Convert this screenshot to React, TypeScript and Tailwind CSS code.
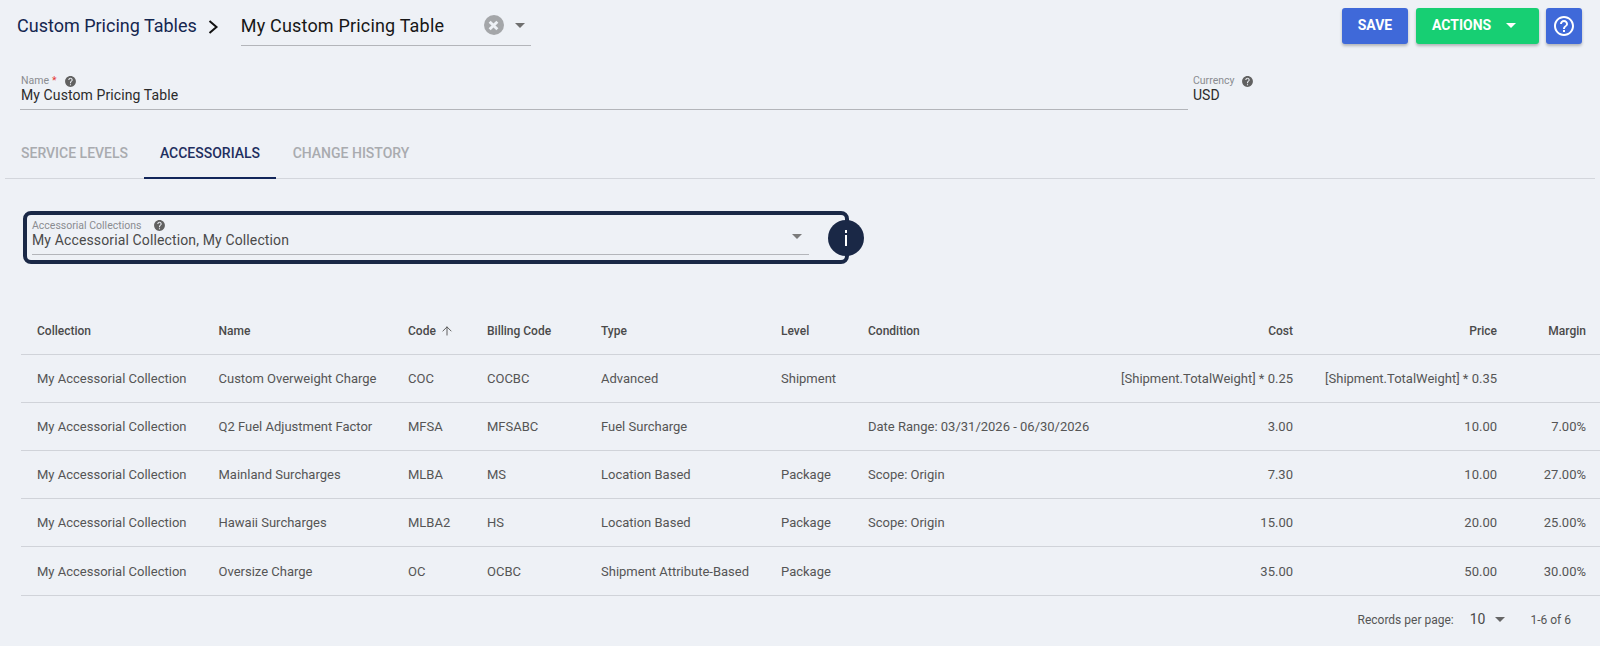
import { ArrowUp } from "lucide-react";

function Caret({ className }: { className: string }) {
  return (
    <svg viewBox="0 0 10 5" className={className} fill="currentColor">
      <path d="M0 0 L10 0 L5 5 Z" />
    </svg>
  );
}

function HelpDot() {
  return (
    <svg viewBox="0 0 24 24" className="w-[13px] h-[13px] text-[#616161]" fill="currentColor">
      <path d="M12 2C6.48 2 2 6.48 2 12s4.48 10 10 10 10-4.48 10-10S17.52 2 12 2zm1 17h-2v-2h2v2zm2.07-7.75l-.9.92C13.45 12.9 13 13.5 13 15h-2v-.5c0-1.1.45-2.1 1.17-2.83l1.24-1.26c.37-.36.59-.86.59-1.41 0-1.1-.9-2-2-2s-2 .9-2 2H8c0-2.21 1.79-4 4-4s4 1.79 4 4c0 .88-.36 1.68-.93 2.25z" />
    </svg>
  );
}

const rows = [
  ["My Accessorial Collection", "Custom Overweight Charge", "COC", "COCBC", "Advanced", "Shipment", "", "[Shipment.TotalWeight] * 0.25", "[Shipment.TotalWeight] * 0.35", ""],
  ["My Accessorial Collection", "Q2 Fuel Adjustment Factor", "MFSA", "MFSABC", "Fuel Surcharge", "", "Date Range: 03/31/2026 - 06/30/2026", "3.00", "10.00", "7.00%"],
  ["My Accessorial Collection", "Mainland Surcharges", "MLBA", "MS", "Location Based", "Package", "Scope: Origin", "7.30", "10.00", "27.00%"],
  ["My Accessorial Collection", "Hawaii Surcharges", "MLBA2", "HS", "Location Based", "Package", "Scope: Origin", "15.00", "20.00", "25.00%"],
  ["My Accessorial Collection", "Oversize Charge", "OC", "OCBC", "Shipment Attribute-Based", "Package", "", "35.00", "50.00", "30.00%"],
];

const headers = ["Collection", "Name", "Code", "Billing Code", "Type", "Level", "Condition", "Cost", "Price", "Margin"];
const widths = ["w-[181.5px]", "w-[189.5px]", "w-[79px]", "w-[114px]", "w-[180px]", "w-[87px]", "w-[250px]", "w-[207px]", "w-[204px]", "w-[89px]"];

export default function App() {
  return (
    <div className="w-[1600px] h-[646px] overflow-hidden bg-[#eef1f6] font-['Roboto',sans-serif] text-[#3d3d3d]">
      <div className="flex items-start justify-between pl-[17px] pr-[18px] pt-[8px]">
        <div className="flex items-start">
          <span className="mt-[7px] text-[18px] leading-[22px] text-[#15264f]">Custom Pricing Tables</span>
          <svg viewBox="0 0 12 16" className="w-[12px] h-[16px] ml-[10px] mt-[11px] text-[#111]" fill="none" stroke="currentColor" strokeWidth="2">
            <path d="M2.5 2 L9.5 8 L2.5 14" />
          </svg>
          <div className="ml-[22px] w-[290px] h-[38px] border-b border-[#b3b5ba] flex items-center">
            <span className="text-[18px] leading-[22px] text-[#171717] mt-[-1px] tracking-[0.18px]">My Custom Pricing Table</span>
            <span className="ml-auto mr-[6px] mb-[3px] flex items-center">
              <span className="w-[20px] h-[20px] mr-[1px] rounded-full bg-[#a4a6a9] flex items-center justify-center">
                <svg viewBox="0 0 10 10" className="w-[11px] h-[11px]" stroke="#eef1f6" strokeWidth="2.6"><path d="M1.5 1.5 L8.5 8.5 M8.5 1.5 L1.5 8.5" /></svg>
              </span>
              <Caret className="w-[10px] h-[5px] ml-[10px] text-[#6f6f6f]" />
            </span>
          </div>
        </div>
        <div className="flex items-start">
          <button className="w-[66px] h-[36px] pb-[1px] rounded-[3px] bg-[#3f69d9] text-white text-[14px] font-bold shadow-[0_2px_3px_rgba(0,0,0,0.25)]">SAVE</button>
          <button className="ml-[8px] w-[123px] h-[36px] pb-[1px] rounded-[3px] bg-[#17cf73] text-white text-[14px] font-bold shadow-[0_2px_3px_rgba(0,0,0,0.25)] flex items-center pl-[16px]">
            ACTIONS
            <Caret className="w-[10px] h-[5px] ml-[15px] text-white" />
          </button>
          <button className="ml-[7px] w-[36px] h-[36px] rounded-[3px] bg-[#3f69d9] shadow-[0_2px_3px_rgba(0,0,0,0.25)] flex items-center justify-center">
            <svg viewBox="0 0 24 24" className="w-[24px] h-[24px]" fill="white">
              <path d="M11 18h2v-2h-2v2zm1-16C6.48 2 2 6.48 2 12s4.48 10 10 10 10-4.48 10-10S17.52 2 12 2zm0 18c-4.41 0-8-3.59-8-8s3.59-8 8-8 8 3.59 8 8-3.59 8-8 8zm0-14c-2.21 0-4 1.79-4 4h2c0-1.1.9-2 2-2s2 .9 2 2c0 2-3 1.75-3 5h2c0-2.25 3-2.5 3-5 0-2.21-1.79-4-4-4z" />
            </svg>
          </button>
        </div>
      </div>

      <div className="flex mt-[28px] pl-[20px]">
        <div className="w-[1168px] h-[36px] border-b border-[#b3b5ba] pl-[1px]">
          <div className="flex items-center h-[14px] text-[10.5px] text-[#8a8c90]">
            <span>Name</span>
            <span className="text-[#e53935] ml-[3px]">*</span>
            <span className="ml-[7px] flex"><HelpDot /></span>
          </div>
          <div className="text-[14px] leading-[20px] text-[#2b2b2b] mt-[-3px] tracking-[0.1px]">My Custom Pricing Table</div>
        </div>
        <div className="ml-[5px]">
          <div className="flex items-center h-[14px] text-[10.5px] text-[#8a8c90]">
            <span>Currency</span>
            <span className="ml-[7px] flex"><HelpDot /></span>
          </div>
          <div className="text-[14px] leading-[20px] text-[#2b2b2b] mt-[-3px]">USD</div>
        </div>
      </div>

      <div className="mt-[19px] mx-[5px] h-[50px] border-b border-[#d3d6dc] flex text-[14px] font-medium">
        <div className="w-[139px] pl-[16px] h-[49px] flex items-center text-[#a9abaf]">SERVICE LEVELS</div>
        <div className="w-[132px] h-[50px] flex items-center justify-center text-[#1f2f60] border-b-2 border-[#12265a]">ACCESSORIALS</div>
        <div className="w-[150px] h-[49px] flex items-center justify-center text-[#a9abaf]">CHANGE HISTORY</div>
      </div>

      <div className="flex items-center mt-[32px] ml-[23px]">
        <div className="w-[826px] h-[53px] rounded-[8px] border-[4px] border-[#1a2846] pl-[5px] pt-[4px]">
          <div className="w-[777px] h-[36px] border-b border-[#b3b5ba] relative">
            <div className="flex items-center h-[13px] text-[10.5px] text-[#8a8c90]">
              <span>Accessorial Collections</span>
              <span className="ml-[12px] flex"><HelpDot /></span>
            </div>
            <div className="text-[14px] leading-[20px] text-[#4a4a4a] mt-[-2px] tracking-[0.13px]">My Accessorial Collection, My Collection</div>
            <Caret className="absolute right-[7px] top-[15px] w-[10px] h-[5px] text-[#7b7b7b]" />
          </div>
        </div>
        <div className="w-[36px] h-[36px] rounded-full bg-[#1a2846] -ml-[21px] relative flex items-center justify-center">
          <span className="block w-[2px] h-[16px] relative bg-white">
            <span className="absolute left-0 top-[3px] w-[2px] h-[2px] bg-[#1a2846]" />
          </span>
        </div>
      </div>

      <div className="mt-[42px] ml-[21px] w-[1579px] overflow-hidden">
        <table className="table-fixed w-[1581px] border-collapse text-[13px]">
          <colgroup>
            {widths.map((w, i) => <col key={i} className={w} />)}
          </colgroup>
          <thead>
            <tr className="h-[48px] border-b border-[#d0d3d9]">
              {headers.map((h, i) => (
                <th key={h} className={`px-[16px] pt-[2px] text-[12px] font-medium text-[#4a4a4a] whitespace-nowrap ${i >= 7 ? "text-right" : "text-left"}`}>
                  {h === "Code" ? (
                    <span className="flex items-center">
                      Code
                      <ArrowUp className="w-[14px] h-[14px] ml-[4px] text-[#555]" strokeWidth={1.6} />
                    </span>
                  ) : h}
                </th>
              ))}
            </tr>
          </thead>
          <tbody>
            {rows.map((r, ri) => (
              <tr key={ri} className={`${ri === 4 ? "h-[49px]" : "h-[48px]"} border-b border-[#d0d3d9]`}>
                {r.map((c, ci) => (
                  <td key={ci} className={`px-[16px] pt-[2px] whitespace-nowrap font-normal text-[#555] ${ci >= 7 ? "text-right" : "text-left"}`}>{c}</td>
                ))}
              </tr>
            ))}
          </tbody>
        </table>
      </div>

      <div className="flex items-center justify-end h-[48px] text-[12px] text-[#555] pr-[29px]">
        <span>Records per page:</span>
        <span className="ml-[16px] text-[14px] text-[#4a4a4a]">10</span>
        <Caret className="w-[10px] h-[5px] ml-[10px] text-[#666]" />
        <span className="ml-[25px]">1-6 of 6</span>
      </div>
    </div>
  );
}
